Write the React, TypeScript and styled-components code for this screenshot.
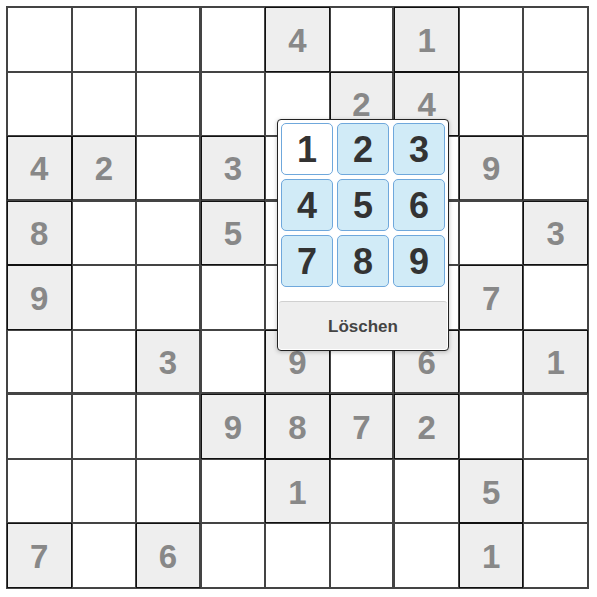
import React from 'react';
import styled, { createGlobalStyle } from 'styled-components';

const GlobalStyle = createGlobalStyle`
	html, body {
		margin: 0;
		padding: 0;
		background: #fff;
		font-family: "Liberation Sans", Arial, sans-serif;
	}
`;

const Page = styled.div`
	padding: 6px;
`;

const Board = styled.div`
	position: relative;
	box-sizing: border-box;
	width: 583px;
	height: 583px;
	display: grid;
	grid-template-columns: repeat(9, 1fr);
	grid-template-rows: repeat(9, 1fr);
	border: 1px solid #444;
`;

interface CellProps {
	$given: boolean;
	$blockRight: boolean;
	$blockBottom: boolean;
}

const Cell = styled.div<CellProps>`
	display: flex;
	align-items: center;
	justify-content: center;
	padding-top: 3px;
	border: 1px solid ${(p) => (p.$given ? '#111' : '#444')};
	border-right-width: ${(p) => (p.$blockRight ? '2px' : '1px')};
	border-bottom-width: ${(p) => (p.$blockBottom ? '2px' : '1px')};
	border-right-color: ${(p) => (p.$blockRight ? '#444' : p.$given ? '#111' : '#444')};
	border-bottom-color: ${(p) => (p.$blockBottom ? '#444' : p.$given ? '#111' : '#444')};
	background: ${(p) => (p.$given ? '#eeeeee' : '#fff')};
	color: #888;
	font-size: 33px;
	font-weight: bold;
`;

const Popup = styled.div`
	position: absolute;
	left: 270px;
	top: 112px;
	width: 172px;
	box-sizing: border-box;
	padding: 3px 3px 1px;
	background: #fff;
	border: 1px solid #222;
	border-radius: 4px;
	box-shadow: 0 1px 4px rgba(0, 0, 0, 0.25);
`;

const Pad = styled.div`
	display: grid;
	grid-template-columns: repeat(3, 52px);
	grid-auto-rows: 52px;
	gap: 4px;
`;

const PadButton = styled.button<{ $active?: boolean }>`
	box-sizing: border-box;
	border: 1px solid #6fa8dc;
	border-radius: 5px;
	background: ${(p) => (p.$active ? '#fff' : '#d1ebf7')};
	color: #333;
	font-family: "Liberation Sans", Arial, sans-serif;
	font-size: 36px;
	font-weight: bold;
	padding: 2px 0 0;
	display: flex;
	align-items: center;
	justify-content: center;
`;

const ClearButton = styled.button`
	display: block;
	box-sizing: border-box;
	width: calc(100% + 4px);
	height: 48px;
	margin: 14px -2px 0;
	padding-top: 3px;
	border: none;
	border-top: 1px solid #d0d0d0;
	border-radius: 3px;
	background: #eeeeee;
	color: #444;
	font-family: "Liberation Sans", Arial, sans-serif;
	font-size: 17px;
	font-weight: bold;
`;

const puzzle = [
	'....4.1..',
	'.....24..',
	'42.3...9.',
	'8..5....3',
	'9......7.',
	'..3.9.6.1',
	'...9872..',
	'....1..5.',
	'7.6....1.',
];

export default function App() {
	return (
		<Page>
			<GlobalStyle />
			<Board>
				{puzzle.flatMap((row, r) =>
					row.split('').map((ch, c) => (
						<Cell
							key={`${r}-${c}`}
							$given={ch !== '.'}
							$blockRight={c === 2 || c === 5}
							$blockBottom={r === 2 || r === 5}
						>
							{ch !== '.' ? ch : ''}
						</Cell>
					)),
				)}
				<Popup>
					<Pad>
						{[1, 2, 3, 4, 5, 6, 7, 8, 9].map((n) => (
							<PadButton key={n} $active={n === 1}>
								{n}
							</PadButton>
						))}
					</Pad>
					<ClearButton>Löschen</ClearButton>
				</Popup>
			</Board>
		</Page>
	);
}
